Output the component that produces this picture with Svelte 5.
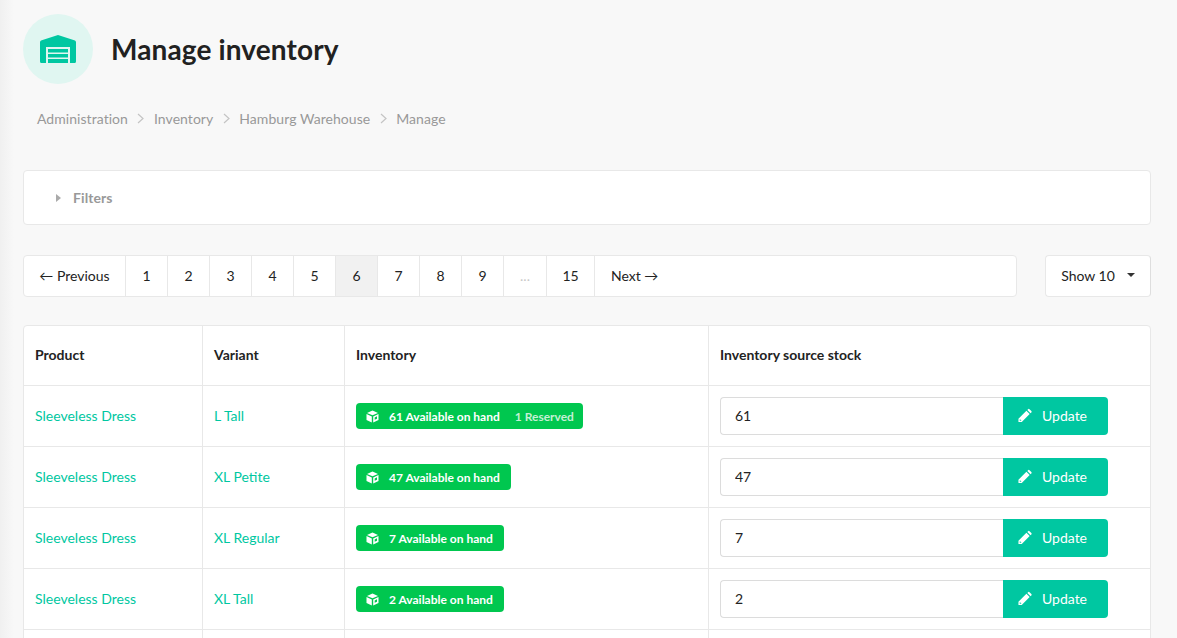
<script>
    const crumbs = ["Administration", "Inventory", "Hamburg Warehouse", "Manage"];
    const pages = ["1", "2", "3", "4", "5", "6", "7", "8", "9", "...", "15"];
    const rows = [
        { product: "Sleeveless Dress", variant: "L Tall", onHand: 61, reserved: 1 },
        { product: "Sleeveless Dress", variant: "XL Petite", onHand: 47, reserved: 0 },
        { product: "Sleeveless Dress", variant: "XL Regular", onHand: 7, reserved: 0 },
        { product: "Sleeveless Dress", variant: "XL Tall", onHand: 2, reserved: 0 }
    ];
</script>

<div class="page">
    <header class="title-row">
        <div class="circle">
            <svg width="36" height="28" viewBox="0 0 36 28">
                <path fill="#00c7a1" d="M18 0 L35 5.500 Q36 6 36 7.500 V26.500 Q36 28 34.500 28 H30 V12 H6 V28 H1.500 Q0 28 0 26.500 V7.500 Q0 6 1 5.500 Z" />
                <path fill="#00c7a1" d="M8 14 H28 V17.500 H8 Z M8 19 H28 V22.500 H8 Z M8 24 H28 V28 H8 Z" />
            </svg>
        </div>
        <h1>Manage inventory</h1>
    </header>

    <nav class="breadcrumb">
        {#each crumbs as crumb, i}
            {#if i > 0}
                <svg class="sep" width="7" height="11" viewBox="0 0 7 11">
                    <path d="M1 1 L6 5.500 L1 10" fill="none" stroke="#c4c4c4" stroke-width="1.200" />
                </svg>
            {/if}
            <span>{crumb}</span>
        {/each}
    </nav>

    <section class="filters">
        <span class="caret"></span>
        <span>Filters</span>
    </section>

    <div class="toolbar">
        <div class="pagination">
            <a class="prev" href="#prev">← Previous</a>
            {#each pages as page}
                <a class="num" class:active={page === "6"} class:gap={page === "..."} class:wide={page === "15"} href="#page">{page}</a>
            {/each}
            <a class="next" href="#next">Next →</a>
        </div>
        <button class="show">Show 10 <span class="down"></span></button>
    </div>

    <table>
        <thead>
            <tr>
                <th class="c1">Product</th>
                <th class="c2">Variant</th>
                <th class="c3">Inventory</th>
                <th>Inventory source stock</th>
            </tr>
        </thead>
        <tbody>
            {#each rows as row}
                <tr>
                    <td><a href="#product">{row.product}</a></td>
                    <td><a href="#variant">{row.variant}</a></td>
                    <td>
                        <span class="tag">
                            <svg width="13" height="13" viewBox="0 0 13 13">
                                <path fill="#fff" d="M6.500 0.500 L12 2.900 L6.500 5.300 L1 2.900 Z" />
                                <path fill="#fff" fill-rule="evenodd" d="M0.500 4 L5.800 6.400 V12.600 L0.500 10 Z M12.500 4 L7.200 6.400 V12.600 L12.500 10 Z M11 6.300 L8.700 7.400 V9.800 L11 8.700 Z" />
                            </svg>
                            <span class="on-hand">{row.onHand} Available on hand</span>
                            {#if row.reserved}
                                <span class="reserved">{row.reserved} Reserved</span>
                            {/if}
                        </span>
                    </td>
                    <td>
                        <div class="stock">
                            <input type="text" value={row.onHand} />
                            <button class="update">
                                <svg width="14" height="15" viewBox="0 0 15 15">
                                    <path fill="#fff" fill-rule="evenodd" d="M0.500 11 L9 2.500 L12.500 6 L4 14.500 L0.500 14.500 Z M2 11.200 L1.800 13.200 L3.800 13 Z" />
                                    <path fill="#fff" d="M10 1.500 L10.800 0.700 Q11.500 0 12.300 0.700 L14.300 2.700 Q15 3.500 14.300 4.200 L13.500 5 Z" />
                                </svg>
                                Update
                            </button>
                        </div>
                    </td>
                </tr>
            {/each}
            <!-- next row starts right at the fold -->
            <tr><td></td><td></td><td></td><td></td></tr>
        </tbody>
    </table>
</div>

<style>
    :global(body) {
        margin: 0;
        background: #f8f8f8;
        overflow: hidden;
    }

    .page {
        height: 638px;
        overflow: hidden;
        box-sizing: border-box;
        padding: 14px 26px 0 23px;
        font-family: Lato, "Open Sans", sans-serif;
        font-size: 14px;
        color: #232323;
        background: linear-gradient(to right, #f0f0f0, #f8f8f8 14px);
    }

    .title-row {
        display: flex;
        align-items: center;
        gap: 18px;
    }

    .circle {
        width: 70px;
        height: 70px;
        border-radius: 50%;
        background: #e0f6f1;
        display: flex;
        align-items: center;
        justify-content: center;
    }

    h1 {
        margin: 0;
        font-size: 28px;
        font-weight: 700;
        letter-spacing: 0.12px;
        color: #212121;
    }

    .breadcrumb {
        display: flex;
        align-items: center;
        gap: 9.500px;
        margin: 24px 0 0 14px;
        height: 20px;
        color: #999;
        letter-spacing: 0.05px;
    }

    .filters {
        display: flex;
        align-items: center;
        height: 55px;
        box-sizing: border-box;
        margin-top: 42px;
        padding-left: 32px;
        gap: 12px;
        background: #fff;
        border: 1px solid #e8e8e8;
        border-radius: 4px;
        color: #999;
        font-weight: 700;
        letter-spacing: 0.1px;
    }

    .caret {
        border-left: 5px solid #aaa;
        border-top: 4px solid transparent;
        border-bottom: 4px solid transparent;
    }

    .toolbar {
        display: flex;
        justify-content: space-between;
        margin-top: 30px;
    }

    .pagination {
        display: flex;
        width: 994px;
        height: 42px;
        box-sizing: border-box;
        background: #fff;
        border: 1px solid #e8e8e8;
        border-radius: 4px;
        overflow: hidden;
    }

    .pagination a {
        display: flex;
        align-items: center;
        justify-content: center;
        padding-bottom: 2px;
        box-sizing: border-box;
        color: #232323;
        text-decoration: none;
    }

    .prev {
        width: 101px;
        flex: none;
    }

    .num {
        width: 42px;
        flex: none;
        border-left: 1px solid #e8e8e8;
    }

    .pagination .wide {
        width: 48px;
    }

    .pagination .active {
        background: #f1f1f1;
    }

    .pagination .gap {
        width: 43px;
        color: #c8c8c8;
    }

    .next {
        border-left: 1px solid #e8e8e8;
        padding-left: 16px;
    }

    .show {
        width: 106px;
        height: 42px;
        background: #fff;
        border: 1px solid #e8e8e8;
        border-right-color: #dedede;
        border-radius: 4px;
        font: inherit;
        color: #232323;
        display: flex;
        align-items: center;
        justify-content: center;
        gap: 12px;
        padding: 0 0 2px;
    }

    .down {
        border-top: 4px solid #333;
        border-left: 4px solid transparent;
        border-right: 4px solid transparent;
    }

    table {
        width: 100%;
        table-layout: fixed;
        margin-top: 28px;
        background: #fff;
        border: 1px solid #e8e8e8;
        border-radius: 4px;
        border-spacing: 0;
    }

    .c1 {
        width: 178px;
    }

    .c2 {
        width: 142px;
    }

    .c3 {
        width: 364px;
    }

    th, td {
        box-sizing: border-box;
        text-align: left;
        padding: 0 11px;
        border-left: 1px solid #e8e8e8;
    }

    th:first-child, td:first-child {
        border-left: none;
    }

    th {
        height: 59px;
        padding-bottom: 2px;
        font-weight: 700;
        color: #232323;
    }

    td {
        height: 61px;
        border-top: 1px solid #e8e8e8;
    }

    td a {
        display: inline-block;
        margin-bottom: 2px;
        color: #00c7a1;
        text-decoration: none;
    }

    .tag {
        display: inline-flex;
        align-items: center;
        height: 26px;
        padding: 0 11px 0 10px;
        background: #00c74f;
        border-radius: 4px;
        color: #fff;
        font-size: 12px;
        font-weight: 700;
    }

    .on-hand {
        margin-left: 10px;
    }

    .reserved {
        margin: 0 -2px 0 15px;
        color: #c4f0d5;
    }

    .stock {
        display: flex;
        width: 388px;
        height: 38px;
    }

    input {
        flex: 1;
        min-width: 0;
        box-sizing: border-box;
        padding: 0 14px 2px;
        border: 1px solid #dcdcdc;
        border-right: none;
        border-radius: 4px 0 0 4px;
        font: inherit;
        color: #232323;
        outline: none;
    }

    .update {
        width: 105px;
        display: flex;
        align-items: center;
        gap: 10px;
        padding: 0 0 2px 15px;
        border: none;
        border-radius: 0 4px 4px 0;
        background: #00c7a1;
        color: #fff;
        font: inherit;
    }
</style>
